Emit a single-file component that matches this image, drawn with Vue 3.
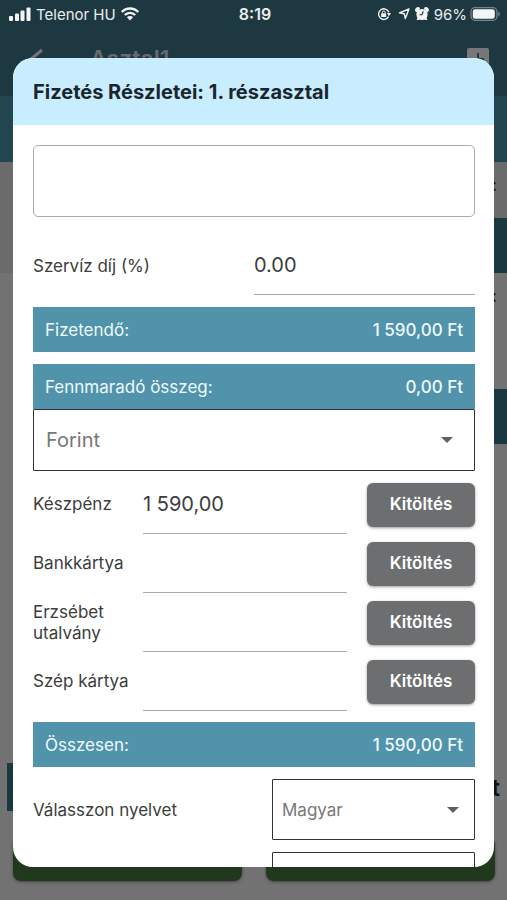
<script setup>
import { ref } from 'vue'

const note = ref('')
const serviceFee = ref('0.00')
const currency = ref('Forint')
const language = ref('Magyar')
const printer = ref('')

const methods = ref([
  { id: 'cash', label: 'Készpénz', amount: '1 590,00' },
  { id: 'card', label: 'Bankkártya', amount: '' },
  { id: 'voucher', label: 'Erzsébet utalvány', amount: '' },
  { id: 'szep', label: 'Szép kártya', amount: '' }
])

function fill(method) {
  methods.value.forEach((m) => { m.amount = '' })
  method.amount = '1 590,00'
}
</script>

<template>
  <div class="screen">
    <div class="backdrop">
      <header class="app-bar">
        <div class="status">
          <div class="status-side">
            <svg class="signal" viewBox="0 0 22 14" aria-hidden="true">
              <rect x="0" y="9" width="4" height="5" rx="1" />
              <rect x="6" y="6.5" width="4" height="7.5" rx="1" />
              <rect x="11.500" y="3.500" width="4" height="10.500" rx="1" />
              <rect x="17.500" y="0.500" width="4" height="13.500" rx="1" />
            </svg>
            <span>Telenor HU</span>
            <svg class="wifi" viewBox="0 0 18 14" aria-hidden="true">
              <path d="M0.800 5C5.200 0.300 12.800 0.300 17.200 5" />
              <path d="M3.800 8C6.700 5.100 11.300 5.100 14.200 8" />
              <path class="solid" d="M5.900 10.200C7.600 8.500 10.400 8.500 12.100 10.200L9 13.500Z" />
            </svg>
          </div>
          <strong class="clock">8:19</strong>
          <div class="status-side status-right">
            <svg class="lock" viewBox="0 0 14 14" aria-hidden="true">
              <path class="line" d="M11.500 9.700A5.300 5.300 0 1 1 11.800 5.200" />
              <path d="M9.900 6H14L12 9.200Z" />
              <rect x="4.200" y="6.200" width="5" height="3.900" rx="0.600" />
              <path class="line thin" d="M5.300 6.500V5.300a1.400 1.400 0 0 1 2.800 0V6.500" />
            </svg>
            <svg class="arrow" viewBox="0 0 12 12" aria-hidden="true">
              <path class="line" d="M11 1L7.300 10.500L6.300 5.800L1.400 4.900Z" />
            </svg>
            <svg class="alarm" viewBox="0 0 14 14" aria-hidden="true">
              <circle cx="7" cy="7.500" r="5.600" />
              <path d="M1 5A2.700 2.700 0 0 1 5 1L4.500 3L2 5.500ZM13 5A2.700 2.700 0 0 0 9 1L9.500 3L12 5.500ZM3 10L1.500 13H3.700L5 12ZM11 10L12.500 13H10.300L9 12Z" />
              <path class="hands" d="M8.300 4.300L7 7.800H4.500" />
            </svg>
            <span>96%</span>
            <svg class="battery" viewBox="0 0 31 14" aria-hidden="true">
              <rect class="case" x="1" y="0.700" width="26" height="12.600" rx="4" />
              <rect x="2.800" y="2.200" width="22" height="9.600" rx="2.400" />
              <path class="tip" d="M28.300 4.500C30.300 5.200 30.300 8.800 28.300 9.500Z" />
            </svg>
          </div>
        </div>
        <div class="nav">
          <svg class="back" viewBox="0 0 16 22" aria-hidden="true"><path d="M14 2L3 11L14 20" /></svg>
          <span class="table-name">Asztal1</span>
          <svg class="add" viewBox="0 0 22 22" aria-hidden="true">
            <rect width="22" height="22" rx="2" />
            <path d="M11 5V17M5 11H17" />
          </svg>
        </div>
      </header>
      <div class="tabs"></div>
      <div class="list-line">:</div>
      <div class="list-line list-head"></div>
      <div class="list-block">:</div>
      <div class="list-head"></div>
      <div class="list-rest"></div>
      <div class="sum">
        <div class="sum-bar"></div>
        <span>t</span>
      </div>
      <div class="actions">
        <div class="action"></div>
        <div class="action"></div>
      </div>
    </div>

    <div class="overlay">
      <section class="dialog" role="dialog" aria-labelledby="dialog-title">
        <h1 id="dialog-title">Fizetés Részletei: 1. részasztal</h1>
        <form class="content" @submit.prevent>
          <textarea v-model="note" class="note" aria-label="Megjegyzés"></textarea>

          <div class="fee">
            <label for="fee">Szervíz díj (%)</label>
            <input id="fee" v-model="serviceFee" class="field" inputmode="decimal">
          </div>

          <div class="total"><span>Fizetendő:</span><span class="amount">1 590,00 Ft</span></div>
          <div class="total remaining"><span>Fennmaradó összeg:</span><span class="amount">0,00 Ft</span></div>

          <div class="picker currency">
            <select v-model="currency" aria-label="Pénznem">
              <option>Forint</option>
              <option>Euro</option>
            </select>
            <svg viewBox="0 0 12 6" aria-hidden="true"><path d="M0 0H12L6 6Z" /></svg>
          </div>

          <div class="methods">
            <div v-for="m in methods" :key="m.id" class="method">
              <label :for="m.id">{{ m.label }}</label>
              <input :id="m.id" v-model="m.amount" class="field" inputmode="decimal">
              <button type="button" @click="fill(m)">Kitöltés</button>
            </div>
          </div>

          <div class="total"><span>Összesen:</span><span class="amount">1 590,00 Ft</span></div>

          <div class="choice">
            <label for="language">Válasszon nyelvet</label>
            <div class="picker">
              <select id="language" v-model="language">
                <option>Magyar</option>
                <option>English</option>
              </select>
              <svg viewBox="0 0 12 6" aria-hidden="true"><path d="M0 0H12L6 6Z" /></svg>
            </div>
          </div>
          <div class="choice">
            <span></span>
            <div class="picker">
              <select v-model="printer" aria-label="Nyomtató">
                <option value=""></option>
              </select>
              <svg viewBox="0 0 12 6" aria-hidden="true"><path d="M0 0H12L6 6Z" /></svg>
            </div>
          </div>
        </form>
      </section>
    </div>
  </div>
</template>

<style>
body {
  background: #727272;
}
</style>

<style scoped>
.screen,
.screen * {
  box-sizing: border-box;
}

.screen {
  position: relative;
  height: 100vh;
  overflow: hidden;
  font-family: Inter, "Liberation Sans", sans-serif;
  font-size: 17px;
  color: #3c3c3c;
}

.backdrop {
  display: flex;
  flex-direction: column;
  height: 100%;
  background: #727272;
}

.app-bar {
  height: 96px;
  flex: none;
  background: #1e3841;
}

.status {
  display: grid;
  grid-template-columns: 1fr auto 1fr;
  align-items: center;
  height: 28px;
  padding: 0 6px 0 9px;
  font-size: 15px;
  color: #e9edee;
}

.status-side {
  display: flex;
  align-items: center;
  gap: 5px;
}

.status-right {
  justify-content: flex-end;
}

.status svg {
  fill: #f4f6f6;
  flex: none;
}

.clock {
  font-size: 16px;
  font-weight: 600;
}

.signal { width: 22px; height: 14px; }
.wifi { width: 18px; height: 14px; }
.status .wifi path:not(.solid) { fill: none; stroke: #f4f6f6; stroke-width: 2.4; }
.lock { width: 14px; height: 14px; }
.arrow { width: 12px; height: 12px; }
.alarm { width: 14px; height: 14px; }
.battery { width: 31px; height: 14px; }
.status .line { fill: none; stroke: #f4f6f6; stroke-width: 1.4; stroke-linejoin: round; }
.status .thin { stroke-width: 1; }
.status .hands { fill: none; stroke: #1e3841; stroke-width: 1.1; }
.status .case { fill: none; stroke: #75868b; stroke-width: 1.3; }
.status .tip { fill: #75868b; }

.status-right .lock { margin-right: 2px; }
.status-right span { margin-right: -2px; }

.nav {
  display: flex;
  align-items: center;
  height: 62px;
  padding: 0 18px 0 28px;
}

.back {
  width: 16px;
  height: 22px;
  fill: none;
  stroke: #737377;
  stroke-width: 3;
}

.table-name {
  flex: 1;
  padding-left: 46px;
  font-size: 23px;
  font-weight: 600;
  color: #68696d;
}

.add {
  width: 22px;
  height: 22px;
  fill: #77777a;
  stroke: #1e3841;
  stroke-width: 2;
}

.add rect { stroke: none; }

.tabs {
  height: 66px;
  flex: none;
  background: #23454f;
}

.list-line,
.list-block {
  flex: none;
  padding: 12px 10px;
  text-align: right;
  font-weight: 500;
  line-height: 22px;
  color: #111;
}

.list-line { height: 56px; background: #6b6b6b; }
.list-block { height: 116px; }

.list-head {
  height: 55px;
  flex: none;
  background-image: linear-gradient(#1b3740, #1b3740);
  background-position: right;
  background-repeat: no-repeat;
  background-size: 50% 100%;
}

.list-rest { flex: 1; }

.sum {
  display: flex;
  align-items: center;
  height: 48px;
  padding: 0 7px;
  font-size: 24px;
  font-weight: 600;
  color: #111;
}

.sum-bar {
  flex: 1;
  height: 100%;
  background: linear-gradient(to right, #1b3740 50%, transparent 50%);
}

.actions {
  display: grid;
  grid-template-columns: 1fr 1fr;
  gap: 24px;
  padding: 26px 12px 19px 13px;
}

.action {
  height: 44px;
  border-radius: 8px;
  background: #20391c;
  box-shadow: 0 1px 3px #444;
}

.overlay {
  position: absolute;
  inset: 0;
  display: flex;
  padding: 58px 13px 33px;
}

.dialog {
  display: flex;
  flex-direction: column;
  flex: 1;
  min-width: 0;
  overflow: hidden;
  border-radius: 20px;
  background: #fff;
}

h1 {
  flex: none;
  margin: 0;
  padding: 20px 20px 19px;
  background: #c7edfe;
  font-size: 20px;
  font-weight: 700;
  line-height: 28px;
  color: #1b252c;
}

.content {
  flex: 1;
  min-height: 0;
  padding: 20px 19px 20px 20px;
  overflow-y: auto;
  scrollbar-width: none;
}

.note {
  display: block;
  width: 100%;
  height: 72px;
  padding: 12px;
  border: 1px solid #aaa;
  border-radius: 5px;
  background: #fff;
  font: inherit;
  color: inherit;
  resize: none;
}

.note:focus,
.field:focus {
  outline: none;
  border-color: #5193ab;
}

.field {
  width: 100%;
  min-width: 0;
  height: 59px;
  padding: 0;
  border: 0;
  border-bottom: 1px solid #aaa;
  border-radius: 0;
  background: transparent;
  font: inherit;
  font-size: 20px;
  color: #3c3c3c;
}

.fee {
  display: grid;
  grid-template-columns: 1fr 1fr;
  align-items: center;
  padding: 19px 0 12px;
}

.total {
  display: flex;
  align-items: center;
  justify-content: space-between;
  height: 45px;
  padding: 0 12px;
  background: #5193ab;
  line-height: 20px;
  color: #eefaff;
}

.amount {
  font-weight: 500;
}

.remaining {
  margin-top: 12px;
}

.picker {
  display: grid;
  align-items: center;
  height: 61px;
  border: 1px solid #333;
  border-radius: 1px;
  background: #fff;
}

.picker select,
.picker svg {
  grid-area: 1 / 1;
}

.picker select {
  width: 100%;
  height: 100%;
  padding: 0 40px 0 9px;
  border: 0;
  background: transparent;
  appearance: none;
  font: inherit;
  color: #777;
}

.picker svg {
  justify-self: end;
  width: 12px;
  height: 6px;
  margin-right: 15px;
  fill: #606060;
  pointer-events: none;
}

.currency {
  height: 62px;
}

.currency select {
  padding-left: 12px;
  font-size: 20px;
}

.currency svg {
  margin-right: 21px;
}

.methods {
  padding: 4px 0 11px;
}

.method {
  display: grid;
  grid-template-columns: 110px 1fr 128px;
  align-items: center;
  line-height: 21px;
}

.method label {
  padding-right: 12px;
}

.method button {
  height: 44px;
  margin-left: 20px;
  padding: 0;
  border: 0;
  border-radius: 6px;
  background: #6c6e70;
  box-shadow: 0 1px 3px rgba(0, 0, 0, 0.4);
  font: inherit;
  font-weight: 600;
  color: #fff;
}

.choice {
  display: grid;
  grid-template-columns: 1fr 203px;
  align-items: center;
  padding-top: 12px;
}
</style>
